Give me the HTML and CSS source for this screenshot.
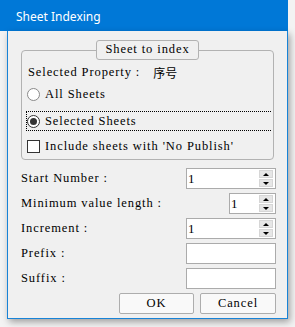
FILE: index.html
```html
<!DOCTYPE html>
<html>
<head>
<meta charset="utf-8">
<link rel="stylesheet" href="styles.css">
</head>
<body>
<div class="win">
  <div class="titlebar"><span class="title">Sheet Indexing</span></div>
  <div class="client">
    <fieldset class="group">
      <legend class="legend">Sheet to index</legend>
      <div class="prop-row"><span>Selected Property :</span><span class="cjk">序号</span></div>
      <div class="opt-row"><span class="radio"></span><span>All Sheets</span></div>
      <div class="opt-row focus"><span class="radio on"></span><span>Selected Sheets</span></div>
      <div class="opt-row check-row"><span class="check"></span><span>Include sheets with 'No Publish'</span></div>
    </fieldset>
    <div class="form">
      <div class="frow"><span>Start Number :</span><div class="field"><span class="val">1</span><div class="spin"><span class="sb up"></span><span class="sb down"></span></div></div></div>
      <div class="frow"><span>Minimum value length :</span><div class="field short"><span class="val">1</span><div class="spin"><span class="sb up"></span><span class="sb down"></span></div></div></div>
      <div class="frow"><span>Increment :</span><div class="field"><span class="val">1</span><div class="spin"><span class="sb up"></span><span class="sb down"></span></div></div></div>
      <div class="frow"><span>Prefix :</span><div class="field"></div></div>
      <div class="frow"><span>Suffix :</span><div class="field"></div></div>
    </div>
    <div class="buttons">
      <div class="btn ok">OK</div>
      <div class="btn cancel">Cancel</div>
    </div>
  </div>
</div>
</body>
</html>
```
FILE: styles.css
```css
html, body {
  margin: 0;
  padding: 0;
}
body {
  background: #f3f3f3;
  width: 295px;
  height: 327px;
  overflow: hidden;
  font-family: "Liberation Serif", serif;
  font-size: 12.5px;
  letter-spacing: 0.9px;
  color: #000;
}
.win {
  width: 288px;
}
.titlebar {
  height: 31px;
  background: #0078d7;
  display: flex;
  align-items: center;
  padding-left: 16px;
  box-sizing: border-box;
}
.title {
  font-family: "Noto Sans", sans-serif;
  font-size: 12px;
  letter-spacing: 0;
  color: #fff;
  padding-top: 1px;
}
.client {
  margin-left: 7px;
  width: 281px;
  height: 288px;
  box-sizing: border-box;
  border: 1px solid #1883d7;
  border-top: none;
  background: #f0f0f0;
  box-shadow: 2px 3px 7px rgba(0,0,0,0.35);
  padding-bottom: 3px;
  display: flex;
  flex-direction: column;
}
.group {
  margin: 9px 13px 0;
  padding: 0;
  border: 1px solid #b2b2b2;
  border-radius: 4px;
  min-inline-size: 0;
}
.legend {
  margin: 0 auto;
  padding: 1px 8px;
  height: 16px;
  line-height: 14px;
  border: 1px solid #b2b2b2;
  border-radius: 3px;
  background: #f0f0f0;
  box-sizing: content-box;
}
.prop-row {
  height: 25px;
  display: flex;
  align-items: center;
  padding-left: 6px;
  box-sizing: border-box;
}
.cjk {
  font-family: "Noto Sans CJK SC", sans-serif;
  letter-spacing: 0;
  margin-left: 13px;
  font-size: 12px;
}
.opt-row {
  height: 18px;
  display: flex;
  align-items: center;
  padding-left: 5px;
  gap: 5px;
}
.focus {
  margin-top: 8px;
  height: 20px;
  box-sizing: border-box;
  margin-left: 4px;
  margin-right: 2px;
  padding-left: 0;
  border: 1px dotted #000;
  border-right: none;
}
.check-row {
  margin-top: 2px;
  height: 26px;
}
.radio {
  width: 13px;
  height: 13px;
  box-sizing: border-box;
  border: 1px solid #8a8a8a;
  border-radius: 50%;
  background: #fff;
  display: flex;
  align-items: center;
  justify-content: center;
  flex: none;
}
.radio.on {
  border-color: #333;
}
.radio.on::after {
  content: "";
  width: 7px;
  height: 7px;
  border-radius: 50%;
  background: #333;
}
.check {
  width: 13px;
  height: 13px;
  box-sizing: border-box;
  border: 1px solid #333;
  background: #fff;
  flex: none;
}
.form {
  margin-top: 8px;
  padding: 0 11px 0 13px;
  display: flex;
  flex-direction: column;
  gap: 4px;
}
.frow {
  height: 21px;
  display: flex;
  align-items: center;
  justify-content: space-between;
}
.field {
  width: 90px;
  height: 21px;
  box-sizing: border-box;
  border: 1px solid #ababab;
  background: #fff;
  display: flex;
  align-items: center;
  padding: 1px 2px 1px 1px;
}
.field.short {
  width: 47px;
}
.val {
  padding-top: 1px;
  letter-spacing: 0;
  font-size: 13px;
}
.spin {
  margin-left: auto;
  width: 14px;
  height: 17px;
  display: flex;
  flex-direction: column;
  gap: 1px;
}
.sb {
  flex: 1;
  background: #e6e6e6;
  border: 1px solid #d6d6d6;
  display: flex;
  align-items: center;
  justify-content: center;
}
.sb::after {
  content: "";
  width: 0;
  height: 0;
  border-left: 3px solid transparent;
  border-right: 3px solid transparent;
}
.sb.up::after {
  border-bottom: 3px solid #000;
}
.sb.down::after {
  border-top: 3px solid #000;
}
.buttons {
  margin-top: 4px;
  padding-right: 11px;
  display: flex;
  justify-content: flex-end;
  gap: 6px;
}
.btn {
  height: 21px;
  box-sizing: border-box;
  border: 1px solid #adadad;
  border-radius: 2px;
  background: #f9f9f9;
  display: flex;
  align-items: center;
  justify-content: center;
}
.ok { width: 75px; }
.cancel { width: 76px; }
```
